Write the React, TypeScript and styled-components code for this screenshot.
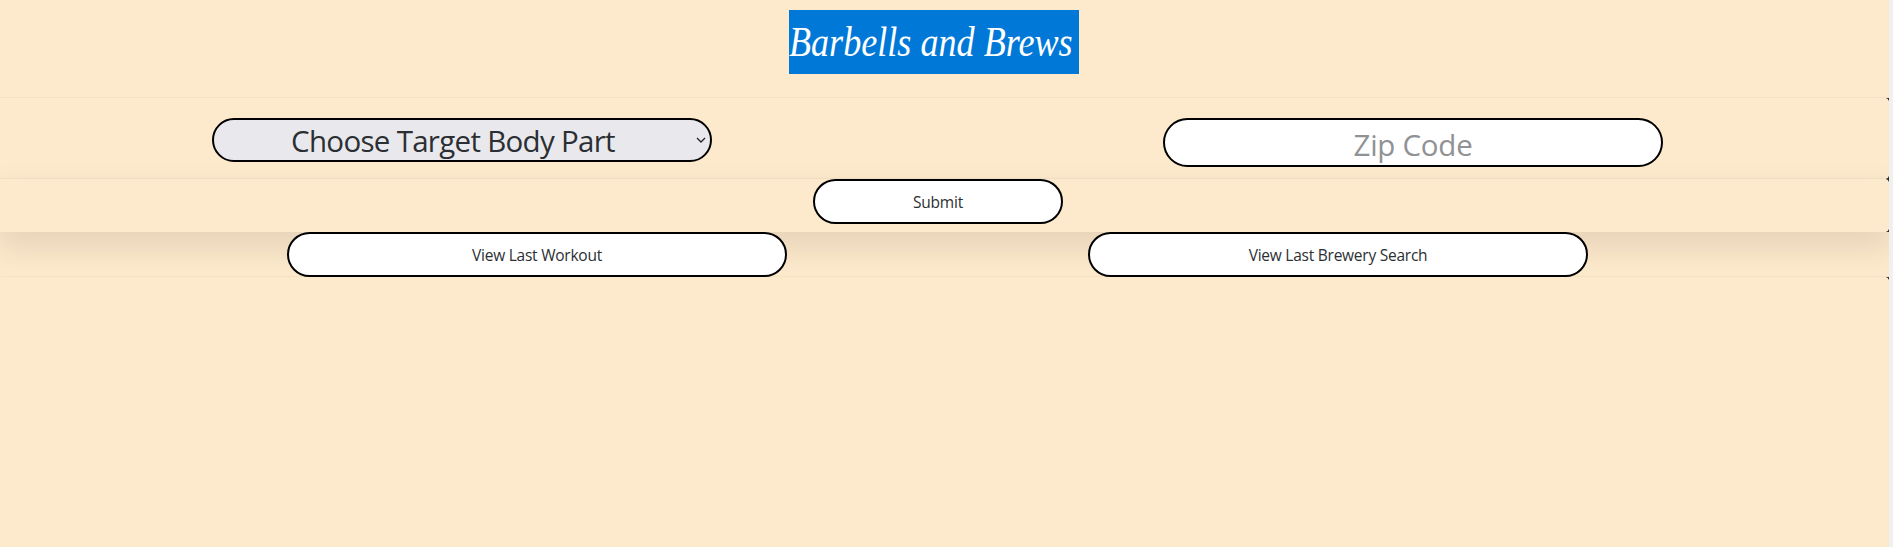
import React from "react";
import styled, { createGlobalStyle, css } from "styled-components";

const Global = createGlobalStyle`
  * { box-sizing: border-box; }
  html { background: #f0f0f0; overflow: hidden; }
  body { margin: 0; color: #212529; font: 16px/24px "Open Sans", sans-serif; }
`;

const Page = styled.main`
  width: calc(100% - 4px);
  height: 547px;
  background: #fde9cb;
  overflow: hidden;
`;

const Header = styled.header`
  height: 98px;
  padding: 10px 21px 0 0;
  display: flex;
  align-items: flex-start;
  justify-content: center;
`;

const Title = styled.h1`
  display: flex;
  align-items: center;
  width: 290px;
  height: 64px;
  margin: 0;
  background: #0078d7;
  color: #fff;
  font: italic 400 42px/64px "Liberation Serif", serif;
  white-space: nowrap;
`;

const TitleText = styled.span`
  display: block;
  transform: scaleX(0.86);
  transform-origin: left center;
`;

const cornerTop = css`
  &::before {
    content: "";
    position: absolute;
    top: 0;
    right: 0;
    width: 3px;
    height: 3px;
    background: radial-gradient(circle at 0 100%, transparent 2.3px, #26292b 3px);
  }
`;

const cornerBottom = css`
  &::after {
    content: "";
    position: absolute;
    bottom: 0;
    right: 0;
    width: 3px;
    height: 3px;
    background: radial-gradient(circle at 0 0, transparent 2.3px, #26292b 3px);
  }
`;

const Row = styled.section<{ $h: number; $raised?: boolean; $top?: boolean; $bottom?: boolean }>`
  position: relative;
  display: flex;
  align-items: flex-start;
  height: ${(p) => p.$h}px;
  box-shadow: ${(p) =>
    p.$raised
      ? "0 14px 32px 4px rgba(0,0,0,.085), 0 -1px 0 rgba(0,0,0,.03)"
      : "0 -1px 0 rgba(0,0,0,.03)"};
  ${(p) => p.$top && cornerTop}
  ${(p) => p.$bottom && cornerBottom}
`;

const PlainRow = styled(Row)`
  box-shadow: none;
`;

const pill = css`
  border: 2px solid #000;
  border-radius: 25px;
  background: #fff;
  color: #2b2f33;
  font-family: "Open Sans", sans-serif;
  text-align: center;
  padding: 0;
  margin: 0;
`;

const SelectShell = styled.button`
  ${pill}
  display: flex;
  align-items: center;
  width: 500px;
  height: 44px;
  margin: 20px 0 0 212px;
  background: #e9e9ed;
  font-size: 29.5px;
  line-height: 40px;
  letter-spacing: -0.7px;
`;

const SelectLabel = styled.span`
  width: 482px;
  padding: 2px 4px 0 0;
  white-space: nowrap;
`;

const ZipInput = styled.input`
  ${pill}
  width: 500px;
  height: 49px;
  margin: 20px 0 0 451px;
  padding-top: 3px;
  font-size: 29.5px;
  letter-spacing: -0.25px;
  &::placeholder { color: #909294; opacity: 1; }
`;

const Button = styled.button<{ $w: number; $left: number }>`
  ${pill}
  width: ${(p) => p.$w}px;
  height: 45px;
  margin-left: ${(p) => p.$left}px;
  font-size: 15.5px;
  line-height: 24px;
  letter-spacing: -0.24px;
`;

export default function App() {
  return (
    <Page>
      <Global />
      <Header>
        <Title><TitleText>Barbells and Brews</TitleText></Title>
      </Header>
      <Row $h={81} $top $bottom>
        <SelectShell type="button">
          <SelectLabel>Choose Target Body Part</SelectLabel>
          <svg width="10" height="6" viewBox="0 0 10 6" fill="none" stroke="#212529" strokeWidth="1.3">
            <path d="M1 1l4 4 4-4" />
          </svg>
        </SelectShell>
        <ZipInput placeholder="Zip Code" />
      </Row>
      <Row $h={53} $raised $top $bottom>
        <Button $w={250} $left={813}>Submit</Button>
      </Row>
      <PlainRow $h={45}>
        <Button $w={500} $left={287}>View Last Workout</Button>
        <Button $w={500} $left={301}>View Last Brewery Search</Button>
      </PlainRow>
      <Row as="footer" $h={270} $top />
    </Page>
  );
}
